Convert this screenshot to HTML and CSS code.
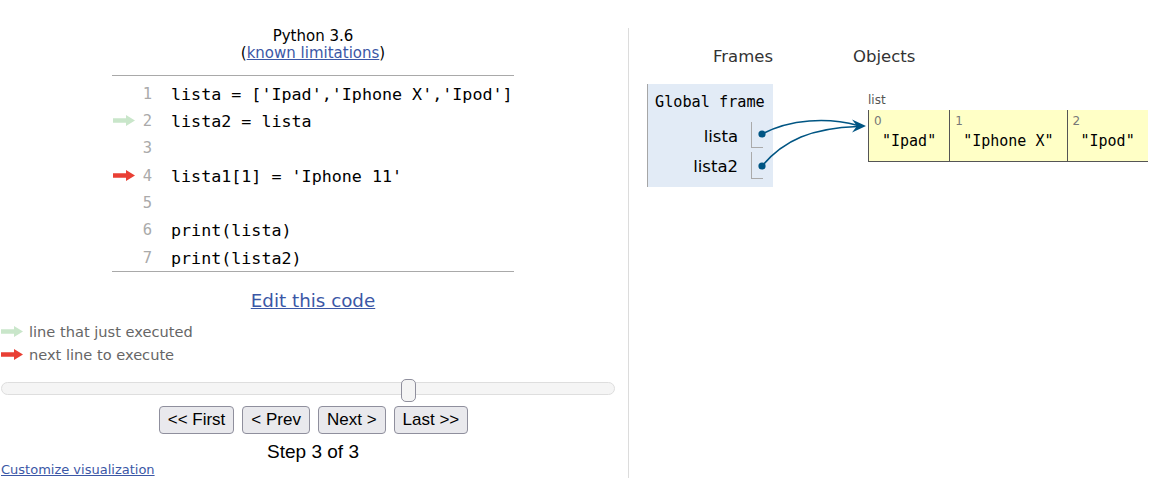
FILE: index.html
```html
<!DOCTYPE html>
<html>
<head>
<meta charset="utf-8">
<link rel="stylesheet" href="styles.css">
</head>
<body>
<div class="main">
  <div class="left">
    <div class="title">Python 3.6</div>
    <div class="title">(<a href="#" class="link">known limitations</a>)</div>
    <div class="code">
      <div class="row"><span class="arr"></span><span class="num">1</span><span class="src">lista = ['Ipad','Iphone X','Ipod']</span></div>
      <div class="row"><span class="arr"><svg width="22" height="11" viewBox="0 0 22 11"><path d="M0 3.2H13V0L22 5.5L13 11V7.8H0Z" fill="#c9e6ca"/></svg></span><span class="num">2</span><span class="src">lista2 = lista</span></div>
      <div class="row"><span class="arr"></span><span class="num">3</span><span class="src"></span></div>
      <div class="row"><span class="arr"><svg width="22" height="11" viewBox="0 0 22 11"><path d="M0 3.2H13V0L22 5.5L13 11V7.8H0Z" fill="#e93f34"/></svg></span><span class="num">4</span><span class="src">lista1[1] = 'Iphone 11'</span></div>
      <div class="row"><span class="arr"></span><span class="num">5</span><span class="src"></span></div>
      <div class="row"><span class="arr"></span><span class="num">6</span><span class="src">print(lista)</span></div>
      <div class="row"><span class="arr"></span><span class="num">7</span><span class="src">print(lista2)</span></div>
    </div>
    <div class="edit"><a href="#" class="link">Edit this code</a></div>
    <div class="legend">
      <div class="leg"><svg width="22" height="11" viewBox="0 0 22 11"><path d="M0 3.2H13V0L22 5.5L13 11V7.8H0Z" fill="#c9e6ca"/></svg><span>line that just executed</span></div>
      <div class="leg"><svg width="22" height="11" viewBox="0 0 22 11"><path d="M0 3.2H13V0L22 5.5L13 11V7.8H0Z" fill="#e93f34"/></svg><span>next line to execute</span></div>
    </div>
    <div class="slider"><div class="thumb"></div></div>
    <div class="buttons">
      <button class="btn">&lt;&lt; First</button>
      <button class="btn">&lt; Prev</button>
      <button class="btn">Next &gt;</button>
      <button class="btn">Last &gt;&gt;</button>
    </div>
    <div class="step">Step 3 of 3</div>
    <div class="custom"><a href="#" class="link">Customize visualization</a></div>
  </div>
  <div class="right">
    <div class="heads">
      <div class="h-frames">Frames</div>
      <div class="h-objects">Objects</div>
    </div>
    <div class="viz">
      <div class="frame">
        <div class="fname">Global frame</div>
        <div class="vars">
          <div class="vname">lista</div><div class="vcell"></div>
          <div class="vname">lista2</div><div class="vcell"></div>
        </div>
      </div>
      <div class="obj">
        <div class="otype">list</div>
        <div class="olist">
          <div class="elt"><div class="idx">0</div><div class="val">"Ipad"</div></div>
          <div class="elt"><div class="idx">1</div><div class="val">"Iphone X"</div></div>
          <div class="elt"><div class="idx">2</div><div class="val">"Ipod"</div></div>
        </div>
      </div>
    </div>
  </div>
</div>
<svg class="arrows" width="1153" height="488" viewBox="0 0 1153 488">
  <path d="M762 134 C790 119 828 117 858 125.5" fill="none" stroke="#005583" stroke-width="1.6"/>
  <path d="M762 166 C784 140 812 128 858 126.5" fill="none" stroke="#005583" stroke-width="1.6"/>
  <path d="M866 126 L852 119.5 L857 126 L852 132.5 Z" fill="#005583"/>
  <circle cx="762" cy="134" r="3.6" fill="#005583"/>
  <circle cx="762" cy="166" r="3.6" fill="#005583"/>
</svg>
</body>
</html>
```

FILE: styles.css
```css
* { box-sizing: border-box; }
html, body { margin: 0; padding: 0; background: #fff; }
body {
  font-family: "DejaVu Sans", Verdana, sans-serif;
  color: #000;
  position: relative;
  width: 1153px;
  height: 488px;
  overflow: hidden;
}
.link { color: #3b57a6; text-decoration: underline; }

.main {
  display: flex;
  align-items: flex-start;
  margin-top: 28px;
}
.left {
  width: 629px;
  height: 450px;
  border-right: 1px solid #dcdcdc;
  display: flex;
  flex-direction: column;
}
.title {
  font-size: 15px;
  line-height: 17px;
  text-align: center;
  color: #000;
  margin-left: -2px;
}
.code {
  margin-top: 13px;
  margin-left: 112px;
  width: 402px;
  border-top: 1px solid #a9a9a9;
  border-bottom: 1px solid #a9a9a9;
  padding-top: 4px;
}
.row {
  display: flex;
  align-items: center;
  height: 27.33px;
}
.arr {
  width: 24px;
  display: flex;
  align-items: center;
  padding-left: 1px;
}
.arr svg { display: block; }
.num {
  width: 16px;
  text-align: right;
  font-family: "DejaVu Sans Mono", monospace;
  font-size: 15.5px;
  color: #aaa;
}
.src {
  margin-left: 19px;
  font-family: "DejaVu Sans Mono", monospace;
  font-size: 16.7px;
  white-space: pre;
  color: #000;
}
.edit {
  margin-top: 19px;
  text-align: center;
  font-size: 18.3px;
  line-height: 20px;
  margin-left: -2px;
}
.legend {
  margin-top: 9px;
  font-size: 14.6px;
  color: #666;
}
.leg {
  display: flex;
  align-items: center;
  height: 23px;
  gap: 6px;
  padding-left: 1px;
}
.leg svg { display: block; }
.slider {
  position: relative;
  margin-top: 16px;
  margin-left: 1px;
  width: 614px;
  height: 13px;
  border: 1px solid #dedede;
  border-radius: 7px;
  background: #f5f5f5;
}
.thumb {
  position: absolute;
  left: 399px;
  top: -4px;
  width: 15px;
  height: 23px;
  border: 1px solid #8f8f9d;
  border-radius: 5px;
  background: #f4f4f4;
}
.buttons {
  margin-top: 11px;
  display: flex;
  justify-content: center;
  gap: 8px;
  margin-left: -1px;
}
.btn {
  font-family: "Liberation Sans", Arial, sans-serif;
  font-size: 17px;
  line-height: 20px;
  height: 28px;
  padding: 3px 8px;
  background: #e9e9ed;
  border: 1px solid #8f8f9d;
  border-radius: 4px;
  color: #000;
  margin: 0;
}
.step {
  margin-top: 8px;
  text-align: center;
  font-family: "Liberation Sans", Arial, sans-serif;
  font-size: 19px;
  line-height: 20px;
  margin-left: -2px;
}
.custom {
  font-size: 13px;
  line-height: 14px;
  margin-top: 1px;
  padding-left: 1px;
}

.right {
  padding-left: 18px;
}
.heads {
  display: flex;
  margin-top: 19px;
  font-size: 16.5px;
  line-height: 20px;
  color: #333;
}
.h-frames { width: 126px; text-align: right; }
.h-objects { margin-left: 80px; }
.viz {
  display: flex;
  align-items: flex-start;
  margin-top: 17px;
}
.frame {
  width: 126px;
  height: 103px;
  background: #e2ebf6;
  border-left: 1px solid #a6a6a6;
  padding: 9px 10px 0 7px;
}
.fname {
  font-family: "DejaVu Sans Mono", monospace;
  font-size: 15.2px;
  line-height: 18px;
  white-space: nowrap;
}
.vars {
  margin-top: 11px;
  display: grid;
  grid-template-columns: 1fr 12px;
  column-gap: 13px;
  row-gap: 4px;
}
.vname {
  text-align: right;
  font-size: 16.5px;
  line-height: 27px;
  height: 26px;
  padding-top: 1px;
}
.vcell {
  height: 26px;
  border-left: 1px solid #aaa;
  border-bottom: 1px solid #aaa;
}
.vars .vcell:last-child { height: 27px; }
.obj {
  margin-left: 95px;
  margin-top: 9px;
}
.otype {
  font-size: 12px;
  line-height: 14px;
  color: #555;
}
.olist {
  display: flex;
  margin-top: 3px;
  background: #ffffc6;
  border-bottom: 1px solid #555;
}
.elt {
  border-left: 1px solid #555;
  height: 51px;
  padding-top: 4px;
}
.idx {
  font-size: 12px;
  line-height: 14px;
  color: #777;
  padding-left: 5px;
}
.val {
  margin-top: 4px;
  padding: 0 13px;
  font-family: "DejaVu Sans Mono", monospace;
  font-size: 15px;
  line-height: 18px;
  white-space: pre;
}
.arrows {
  position: absolute;
  left: 0;
  top: 0;
  pointer-events: none;
}
```
